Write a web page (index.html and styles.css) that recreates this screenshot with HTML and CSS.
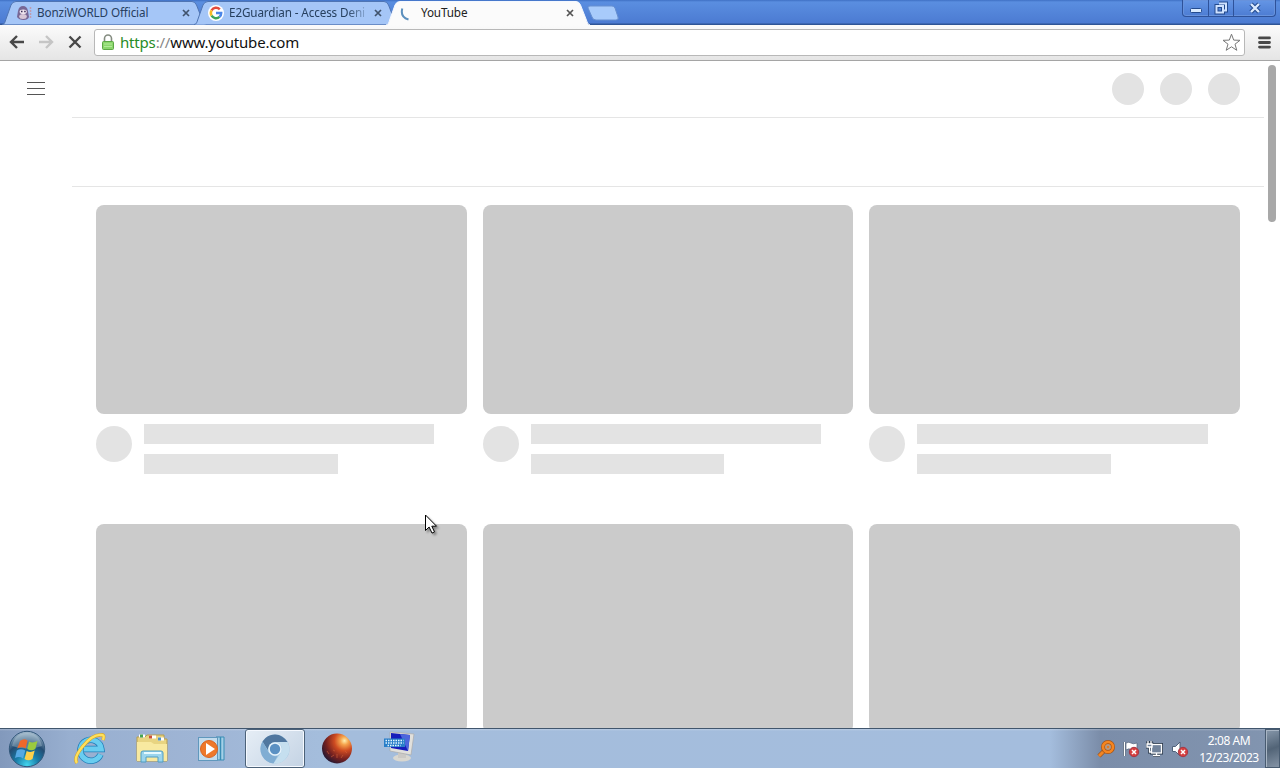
FILE: index.html
```
<!DOCTYPE html>
<html lang="en">
<head>
    <meta charset="UTF-8">
    <title>YouTube</title>
    <link rel="stylesheet" href="styles.css">
</head>
<body>
    <header class="tabstrip">
        <div class="tab">
            <svg class="tab-shape" width="204" height="25" viewBox="0 0 204 25"><path d="M0 24.500C2.500 24.500 3 22 4 19L9 5Q10.500 1.500 14 1.500H190Q193 1.500 194.500 5L200 19Q201.500 24.500 204 24.500"/></svg>
            <svg class="favicon" width="16" height="16" viewBox="0 0 16 16">
                <path d="M2 6Q3 1 7 1T12 6L13 12Q12 15 7.500 15T1 12Z" fill="#776795"/>
                <ellipse cx="7" cy="11.500" rx="3.800" ry="2.500" fill="#d7c7d6"/>
                <ellipse cx="7.200" cy="6.800" rx="3.600" ry="2.300" fill="#eee4ed"/>
                <path d="M5 6.500h1.500M8.200 6.500h1.500" stroke="#392c55" stroke-width="1.500"/>
                <path d="M14.500 2v12" stroke="#c09cae" stroke-width="1.500" stroke-dasharray="2 1"/>
            </svg>
            <span class="tab-title">BonziWORLD Official</span>
            <svg class="tab-close" width="8" height="8" viewBox="0 0 8 8"><path d="M1 1l6 6M7 1l-6 6"/></svg>
        </div>
        <div class="tab">
            <svg class="tab-shape" width="204" height="25" viewBox="0 0 204 25"><path d="M0 24.500C2.500 24.500 3 22 4 19L9 5Q10.500 1.500 14 1.500H190Q193 1.500 194.500 5L200 19Q201.500 24.500 204 24.500"/></svg>
            <svg class="favicon" width="16" height="16" viewBox="0 0 16 16">
                <circle cx="8" cy="8" r="8" fill="#fff"/>
                <g fill="none" stroke-width="2.500">
                    <path d="M3.600 5.300A5.200 5.200 0 0 1 11.800 4.400" stroke="#e34a3c"/>
                    <path d="M3.600 10.700A5.200 5.200 0 0 1 3.600 5.300" stroke="#f5bb27"/>
                    <path d="M11.500 11.900A5.200 5.200 0 0 1 3.600 10.700" stroke="#3ba45a"/>
                    <path d="M8 8h5.200A5.200 5.200 0 0 1 11.500 11.900" stroke="#4b86e8"/>
                </g>
            </svg>
            <span class="tab-title tab-title-fade">E2Guardian - Access Deni</span>
            <svg class="tab-close" width="8" height="8" viewBox="0 0 8 8"><path d="M1 1l6 6M7 1l-6 6"/></svg>
        </div>
        <div class="tab active">
            <svg class="tab-shape" width="204" height="25" viewBox="0 0 204 25"><path d="M0 25C2.500 25 3 22 4 19L9 5Q10.500 1.500 14 1.500H190Q193 1.500 194.500 5L200 19Q201.500 25 204 25"/></svg>
            <svg class="favicon" width="16" height="16" viewBox="0 0 16 16"><path d="M2.300 3.500Q0 12 8.500 14.500" fill="none" stroke="#5b8fbd" stroke-width="2"/></svg>
            <span class="tab-title">YouTube</span>
            <svg class="tab-close" width="8" height="8" viewBox="0 0 8 8"><path d="M1 1l6 6M7 1l-6 6"/></svg>
        </div>
        <svg class="new-tab" width="33" height="16" viewBox="0 0 33 16"><path d="M3 1H25Q27 1 28 3L31 12Q32 15 29 15H9Q6 15 5 12L1 3Q0.500 1 3 1Z" fill="#a8cbfb" stroke="#668fd0"/></svg>
        <div class="window-buttons">
            <span class="win-min"><svg width="14" height="14" viewBox="0 0 14 14"><rect x="1.500" y="7.500" width="11" height="4" rx="1" fill="#d9eaff" stroke="#244b8e"/></svg></span>
            <span class="win-max"><svg width="14" height="14" viewBox="0 0 14 14"><g fill="none" stroke="#244b8e" stroke-width="4"><path d="M5 2.500h7v7h-2"/><rect x="2.500" y="5" width="6.500" height="6.500"/></g><g fill="none" stroke="#cfe2ff" stroke-width="2"><path d="M5 2.500h7v7h-2"/><rect x="2.500" y="5" width="6.500" height="6.500"/></g></svg></span>
            <span class="win-close"><svg width="14" height="14" viewBox="0 0 14 14"><path d="M3 3l8 8M11 3l-8 8" stroke="#244b8e" stroke-width="4.500"/><path d="M3 3l8 8M11 3l-8 8" stroke="#dcebff" stroke-width="2.400"/></svg></span>
        </div>
    </header>

    <nav class="toolbar">
        <svg class="tool back" width="16" height="14" viewBox="0 0 16 14"><path d="M8 1L2 7l6 6M2.500 7H15"/></svg>
        <svg class="tool forward" width="16" height="14" viewBox="0 0 16 14"><path d="M8 1l6 6-6 6M13.500 7H1"/></svg>
        <svg class="tool stop" width="14" height="14" viewBox="0 0 14 14"><path d="M1.500 1.500l11 11M12.500 1.500l-11 11"/></svg>
        <div class="omnibox">
            <svg class="lock" width="12" height="16" viewBox="0 0 12 16"><path d="M2.500 8V4.500a3.500 3.500 0 0 1 7 0V8" fill="none" stroke="#848c80" stroke-width="1.600"/><rect x=".5" y="7.500" width="11" height="8" rx="1" fill="#8bd66c" stroke="#5ca745"/><path d="M2 10h8M2 12.500h8" stroke="#b2eb98"/></svg>
            <span class="url"><span class="scheme">https</span><span class="slashes">://</span>www.youtube.com</span>
            <svg class="star" width="19" height="19" viewBox="0 0 19 19"><path d="M9.500 1.200l2.200 5.900 6.300.2-5 3.900 1.800 6.100-5.300-3.500-5.300 3.500L6 11.200l-5-3.900 6.300-.2Z" fill="#fff" stroke="#777" stroke-linejoin="round"/></svg>
        </div>
        <svg class="menu" width="13" height="13" viewBox="0 0 13 13"><path d="M1.500 1.900h10M1.500 6.500h10M1.500 11.100h10" stroke="#484848" stroke-width="2.800" stroke-linecap="round"/></svg>
    </nav>

    <main class="page">
        <div class="masthead">
            <svg class="guide" width="18" height="13" viewBox="0 0 18 13"><path d="M0 .5h18M0 6.500h18M0 12.500h18" stroke="#555"/></svg>
            <div class="masthead-buttons"><i></i><i></i><i></i></div>
        </div>
        <div class="chips"></div>
        <div class="grid">
            <div class="video"><div class="thumb"></div><div class="details"><div class="avatar"></div><div class="lines"><div class="line"></div><div class="line short"></div></div></div></div>
            <div class="video"><div class="thumb"></div><div class="details"><div class="avatar"></div><div class="lines"><div class="line"></div><div class="line short"></div></div></div></div>
            <div class="video"><div class="thumb"></div><div class="details"><div class="avatar"></div><div class="lines"><div class="line"></div><div class="line short"></div></div></div></div>
            <div class="video"><div class="thumb"></div></div>
            <div class="video"><div class="thumb"></div></div>
            <div class="video"><div class="thumb"></div></div>
        </div>
        <div class="scrollbar"></div>
    </main>

    <footer class="taskbar">
        <div class="start">
            <svg width="38" height="38" viewBox="0 0 38 38">
                <defs>
                    <radialGradient id="orb" cx=".5" cy=".95" r=".95"><stop offset="0" stop-color="#42d5ee"/><stop offset=".35" stop-color="#187ca8"/><stop offset=".65" stop-color="#244c72"/><stop offset="1" stop-color="#a7bed0"/></radialGradient>
                </defs>
                <circle cx="19" cy="19" r="17.700" fill="url(#orb)" stroke="#32587b"/>
                <path d="M4 16Q7 3 19 3t15 13Q19 21 4 16Z" fill="#d5e7ed" opacity=".3"/>
                <path d="M12 11q4-3 7.500-.5L17.700 18.500q-4-2.500-8.500 0Z" fill="#ed682b"/>
                <path d="M21 11.500q4 2 8.500-.5L27.300 19q-4 2.500-8 0Z" fill="#9bca3f"/>
                <path d="M8.800 20.500q4-2.500 8.500 0L15 28.500q-3.500-2.500-8-.5Z" fill="#55a9e4"/>
                <path d="M18.700 21q4 2 8-.5L24.500 29q-4 2.500-8 0Z" fill="#fdd04b"/>
            </svg>
        </div>
        <div class="task">
            <svg width="32" height="32" viewBox="0 0 32 32">
                <path d="M26.500 21.500A10.500 10.500 0 1 1 27.300 16H10" fill="none" stroke="#227fb8" stroke-width="6.500"/>
                <path d="M26.500 21.500A10.500 10.500 0 1 1 27.300 16H10" fill="none" stroke="#69cdf0" stroke-width="5"/>
                <path d="M3 30Q-1 25 9 13T27 2q4-1 2 5" fill="none" stroke="#d6a62b" stroke-width="3.500"/>
                <path d="M3 30Q-1 25 9 13T27 2q4-1 2 5" fill="none" stroke="#ffe05a" stroke-width="2.400"/>
            </svg>
        </div>
        <div class="task">
            <svg width="34" height="32" viewBox="0 0 34 32">
                <path d="M2 4h8l2-2h17v4h3v22H2Z" fill="#e8d481" stroke="#b89e4c"/>
                <path d="M4 3h6M14 4h7M23 6h6" stroke="#fff" stroke-width="3"/>
                <path d="M5 3h3" stroke="#45a353" stroke-width="3"/><path d="M14 4h3" stroke="#cc4e37" stroke-width="3"/><path d="M23 6h3" stroke="#4d91c7" stroke-width="3"/>
                <path d="M2 9h14l3 2h13v17H2Z" fill="#f8e9a0"/>
                <path d="M6 29v-9q0-2 2-2h18q2 0 2 2v9h-5v-5H11v5Z" fill="#9bd5ed" stroke="#4e9dc3"/><path d="M9 20h17" stroke="#e6faff" stroke-width="2"/>
            </svg>
        </div>
        <div class="task">
            <svg class="media-icon" width="30" height="30" viewBox="0 0 30 30">
                <path d="M19 3h8v23h-8" fill="#a4d0e7" stroke="#398db5"/><path d="M23.500 3v23" stroke="#398db5" stroke-width="1.500"/>
                <rect x="1.500" y="3.500" width="19" height="23" fill="#c3dced" stroke="#6098bd"/>
                <circle cx="12" cy="15" r="8.500" fill="#ee782a" stroke="#d96421"/><path d="M9 9l9 6-9 6Z" fill="#fff"/>
            </svg>
        </div>
        <div class="task running">
            <svg width="30" height="30" viewBox="0 0 30 30">
                <circle cx="15" cy="15" r="14.500" fill="#a1c5e1"/>
                <path d="M2.500 7.500A14.500 14.500 0 0 1 27.500 8H15a7 7 0 0 0-6.500 9Z" fill="#50779f"/>
                <path d="M2.500 7.500L8.500 18q3 5 9 4l-4 7.400A14.500 14.500 0 0 1 2.500 7.500Z" fill="#80add3"/>
                <path d="M27.500 8H15a7 7 0 0 1 6 10.500l-7.500 11A14.500 14.500 0 0 0 27.500 8Z" fill="#c5dfef"/>
                <circle cx="15" cy="15" r="6.800" fill="#e6f3fb"/><circle cx="15" cy="15" r="5.200" fill="#5b91c3"/>
            </svg>
        </div>
        <div class="task">
            <svg width="32" height="32" viewBox="0 0 32 32">
                <defs><radialGradient id="planet" cx=".75" cy=".24" r=".85"><stop offset="0" stop-color="#fff0b0"/><stop offset=".16" stop-color="#f5a34c"/><stop offset=".4" stop-color="#ce4b21"/><stop offset=".72" stop-color="#752120"/><stop offset="1" stop-color="#251832"/></radialGradient></defs>
                <circle cx="16" cy="15.500" r="15" fill="url(#planet)"/>
                <path d="M6 18l2 3M10 24l3-2M16 21v4M20 25l2-3M24 18l2 2M12 17l2 1" stroke="#d06038" opacity=".6"/>
            </svg>
        </div>
        <div class="task">
            <svg class="keyboard-icon" width="32" height="32" viewBox="0 0 32 32">
                <ellipse cx="19" cy="27" rx="9" ry="3.500" fill="#d9d7d0"/><path d="M15 20h8v7h-8Z" fill="#cbc9c5"/>
                <path d="M7 1l24 2-3 21-21-4Z" fill="#e1e0dc" stroke="#aaa" stroke-width=".7"/>
                <path d="M8 2l19 2-2 16-17-3Z" fill="#171dba"/><path d="M17 3l10 1-2 16Z" fill="#4c66dc"/>
                <rect x="1" y="7.500" width="21" height="8.500" fill="#287ec8"/><path d="M2.500 9.500h18M2.500 12h18M4.500 14.500h13" stroke="#e2f6ff" stroke-width="1.300" stroke-dasharray="1.500 1"/>
            </svg>
        </div>
        <div class="tray">
            <svg width="18" height="18" viewBox="0 0 18 18"><path d="M8 10L2 16" stroke="#9d531a" stroke-width="4.500"/><path d="M8 10L2 16" stroke="#f18523" stroke-width="3"/><circle cx="11" cy="7" r="5" fill="#b59a85" stroke="#a45417" stroke-width="4"/><circle cx="11" cy="7" r="5" fill="none" stroke="#f58520" stroke-width="2.600"/><circle cx="11" cy="7" r="1.200" fill="#e77920"/></svg>
            <svg width="18" height="18" viewBox="0 0 18 18"><path d="M2.500 2v14" stroke="#40536b" stroke-width="3"/><path d="M2.500 2v14" stroke="#fff" stroke-width="1.500"/><path d="M4 3q3-1.500 5 0t6 0v7q-4 1-6-.5T4 10Z" fill="#fff" stroke="#53637a" stroke-width=".7"/><circle cx="12" cy="12" r="4.700" fill="#d64040" stroke="#a53745"/><path d="M10 10l4 4M14 10l-4 4" stroke="#fff" stroke-width="1.500"/></svg>
            <svg width="18" height="18" viewBox="0 0 18 18"><g fill="none" stroke="#29384b" stroke-width="3"><rect x="5.500" y="4.500" width="10" height="8.500"/><path d="M10.500 13v2.500M7 15.500h7M2 1v3M5 1v3M1 4h5v3H1ZM3.500 7v5H5"/></g><g fill="#71839b" stroke="#fff" stroke-width="1.300"><rect x="5.500" y="4.500" width="10" height="8.500"/><path d="M10.500 13v2.500M7 15.500h7M2 1v3M5 1v3M1 4h5v3H1ZM3.500 7v5H5"/></g></svg>
            <svg width="18" height="18" viewBox="0 0 18 18"><path d="M1.500 6.500h3L9 2v14l-4.500-4.500h-3Z" fill="#fff" stroke="#50627a"/><circle cx="12" cy="12" r="4.700" fill="#d64040" stroke="#a53745"/><path d="M10 10l4 4M14 10l-4 4" stroke="#fff" stroke-width="1.500"/></svg>
            <div class="clock">2:08 AM<br>12/23/2023</div>
        </div>
        <div class="show-desktop"></div>
    </footer>

    <svg class="cursor" width="18" height="24" viewBox="0 0 18 24"><path d="M1.500 1v15.500l3.600-3.500 2.900 6.100 2.500-1.200-2.700-5.700h4.700Z" fill="#fff" stroke="#000" stroke-width="1"/></svg>
</body>
</html>
```
FILE: styles.css
```
* { box-sizing: border-box; }
body {
    margin: 0;
    height: 768px;
    overflow: hidden;
    display: flex;
    flex-direction: column;
    background: #fff;
    font-family: "Noto Sans", "Open Sans", sans-serif;
}
svg { display: block; flex: none; }

/* tabs */
.tabstrip {
    height: 25px;
    flex: none;
    display: flex;
    padding-left: 2px;
    background: linear-gradient(#3f70c4 0, #5a8ee0 2px, #4c7bd2 23px, #2f5596 24px);
}
.tab {
    position: relative;
    width: 204px;
    height: 25px;
    flex: none;
    margin-right: -12px;
    padding: 0 16px 0 14px;
    display: flex;
    align-items: center;
    font-size: 11.700px;
    color: #27405f;
}
.tab-shape {
    position: absolute;
    left: 0;
    top: 0;
    fill: #a5c6f7;
    stroke: #4f75b4;
}
.active { color: #222; z-index: 1; }
.active .tab-shape { fill: #fbfbfb; stroke: #f4f8ff; }
.favicon, .tab-title, .tab-close { position: relative; }
.tab-title {
    margin: -1px 0 0 5px;
    width: 138px;
    white-space: nowrap;
    letter-spacing: -0.120px;
}
.tab-title-fade {
    -webkit-mask-image: linear-gradient(to right, #000 118px, transparent 142px);
    mask-image: linear-gradient(to right, #000 118px, transparent 142px);
}
.tab-close {
    margin-left: 7px;
    stroke: #40536d;
    stroke-width: 1.700;
}
.active .tab-close { stroke: #555; }
.new-tab { margin: 5px 0 0 9px; }
.window-buttons {
    display: flex;
    height: 17px;
    margin-left: auto;
    margin-right: 4px;
    border: 1px solid #2e529a;
    border-top: 0;
    border-radius: 0 0 4px 4px;
    background: linear-gradient(#6596e5, #4c7cd3);
    box-shadow: inset 0 0 0 1px #6792dc;
}
.window-buttons span {
    display: flex;
    align-items: center;
    justify-content: center;
    border-right: 1px solid #2e529a;
}
.win-min { width: 26px; }
.win-max { width: 25px; }
.window-buttons .win-close { width: 41px; border: 0; }

/* address bar */
.toolbar {
    height: 36px;
    flex: none;
    display: flex;
    align-items: center;
    padding: 0 9px 1px;
    background: linear-gradient(#fbfbfb, #e5e5e5);
    border-bottom: 1px solid #a5a5a5;
}
.tool {
    fill: none;
    stroke: #484848;
    stroke-width: 2.400;
}
.forward { margin-left: 13px; stroke: #c5c5c5; }
.stop { margin-left: 14px; }
.omnibox {
    width: 1151px;
    height: 27px;
    margin-left: 12px;
    padding: 0 3px 0 7px;
    display: flex;
    align-items: center;
    background: #fff;
    border: 1px solid #b8b8b8;
    border-radius: 3px;
}
.url {
    margin-left: 6px;
    font-size: 15px;
    line-height: 22px;
    letter-spacing: -0.180px;
    color: #111;
}
.scheme { color: #278c27; }
.slashes { color: #888; }
.star { margin-left: auto; }
.menu { margin-left: 13px; }

/* loading page */
.page {
    position: relative;
    height: 667px;
    flex: none;
    overflow: hidden;
}
.masthead {
    height: 56px;
    display: flex;
    align-items: center;
    justify-content: space-between;
    padding: 0 40px 0 27px;
}
.guide { margin-bottom: 2px; }
.masthead-buttons { display: flex; gap: 16px; }
.masthead-buttons i {
    width: 32px;
    height: 32px;
    border-radius: 50%;
    background: #e3e3e3;
}
.chips {
    height: 70px;
    margin: 0 16px 0 72px;
    border-top: 1px solid #e5e5e5;
    border-bottom: 1px solid #e5e5e5;
}
.grid {
    display: grid;
    grid-template-columns: repeat(3, 1fr);
    column-gap: 16px;
    padding: 18px 40px 0 96px;
}
.video { height: 319px; }
.thumb {
    height: 209px;
    background: #cbcbcb;
    border-radius: 8px;
}
.details { display: flex; padding-top: 10px; }
.avatar {
    width: 36px;
    height: 36px;
    margin: 2px 12px 0 0;
    border-radius: 50%;
    background: #e3e3e3;
}
.lines { flex: 1; }
.line {
    width: 90%;
    height: 20px;
    margin-bottom: 10px;
    background: #e3e3e3;
}
.short { width: 60%; }
.scrollbar {
    position: absolute;
    top: 4px;
    right: 4px;
    width: 8px;
    height: 157px;
    border-radius: 4px;
    background: #a8a8a8;
}

/* taskbar */
.taskbar {
    height: 40px;
    flex: none;
    display: flex;
    padding-left: 8px;
    border-top: 1px solid #41566d;
    background: linear-gradient(rgba(255,255,255,.25), transparent 2px), linear-gradient(90deg, #8299bc, #98afd0 70px, #9fb5d5 200px, #a4bddc 320px, #a4bddd 1050px, #7b8da9 1100px, #8295b0);
}
.start { width: 52px; padding-top: 1px; }
.task {
    width: 60px;
    height: 39px;
    margin-right: 1.700px;
    display: flex;
    align-items: center;
    justify-content: center;
}
.running {
    border: 1px solid #4c6279;
    border-radius: 3px;
    background: linear-gradient(135deg, #e6eef6, #c4d3e4);
    box-shadow: inset 0 0 0 1px #f5f9ff;
}
.media-icon { margin-right: 2px; }
.keyboard-icon { margin: -4px 0 0 2px; }
.tray {
    margin-left: auto;
    margin-right: 2px;
    display: flex;
    align-items: center;
    gap: 6.500px;
}
.clock {
    width: 68px;
    text-align: center;
    color: #fff;
    font-size: 12px;
    line-height: 17px;
    letter-spacing: -0.420px;
}
.show-desktop {
    width: 15px;
    border: 1px solid #485b70;
    background: linear-gradient(160deg, #8798ab, #526477 50%, #8493a5);
    box-shadow: inset 1px 1px 0 #a8b5c4;
}
.cursor {
    position: absolute;
    left: 424px;
    top: 514px;
    filter: drop-shadow(2px 2px 1px rgba(0,0,0,.35));
}
```
